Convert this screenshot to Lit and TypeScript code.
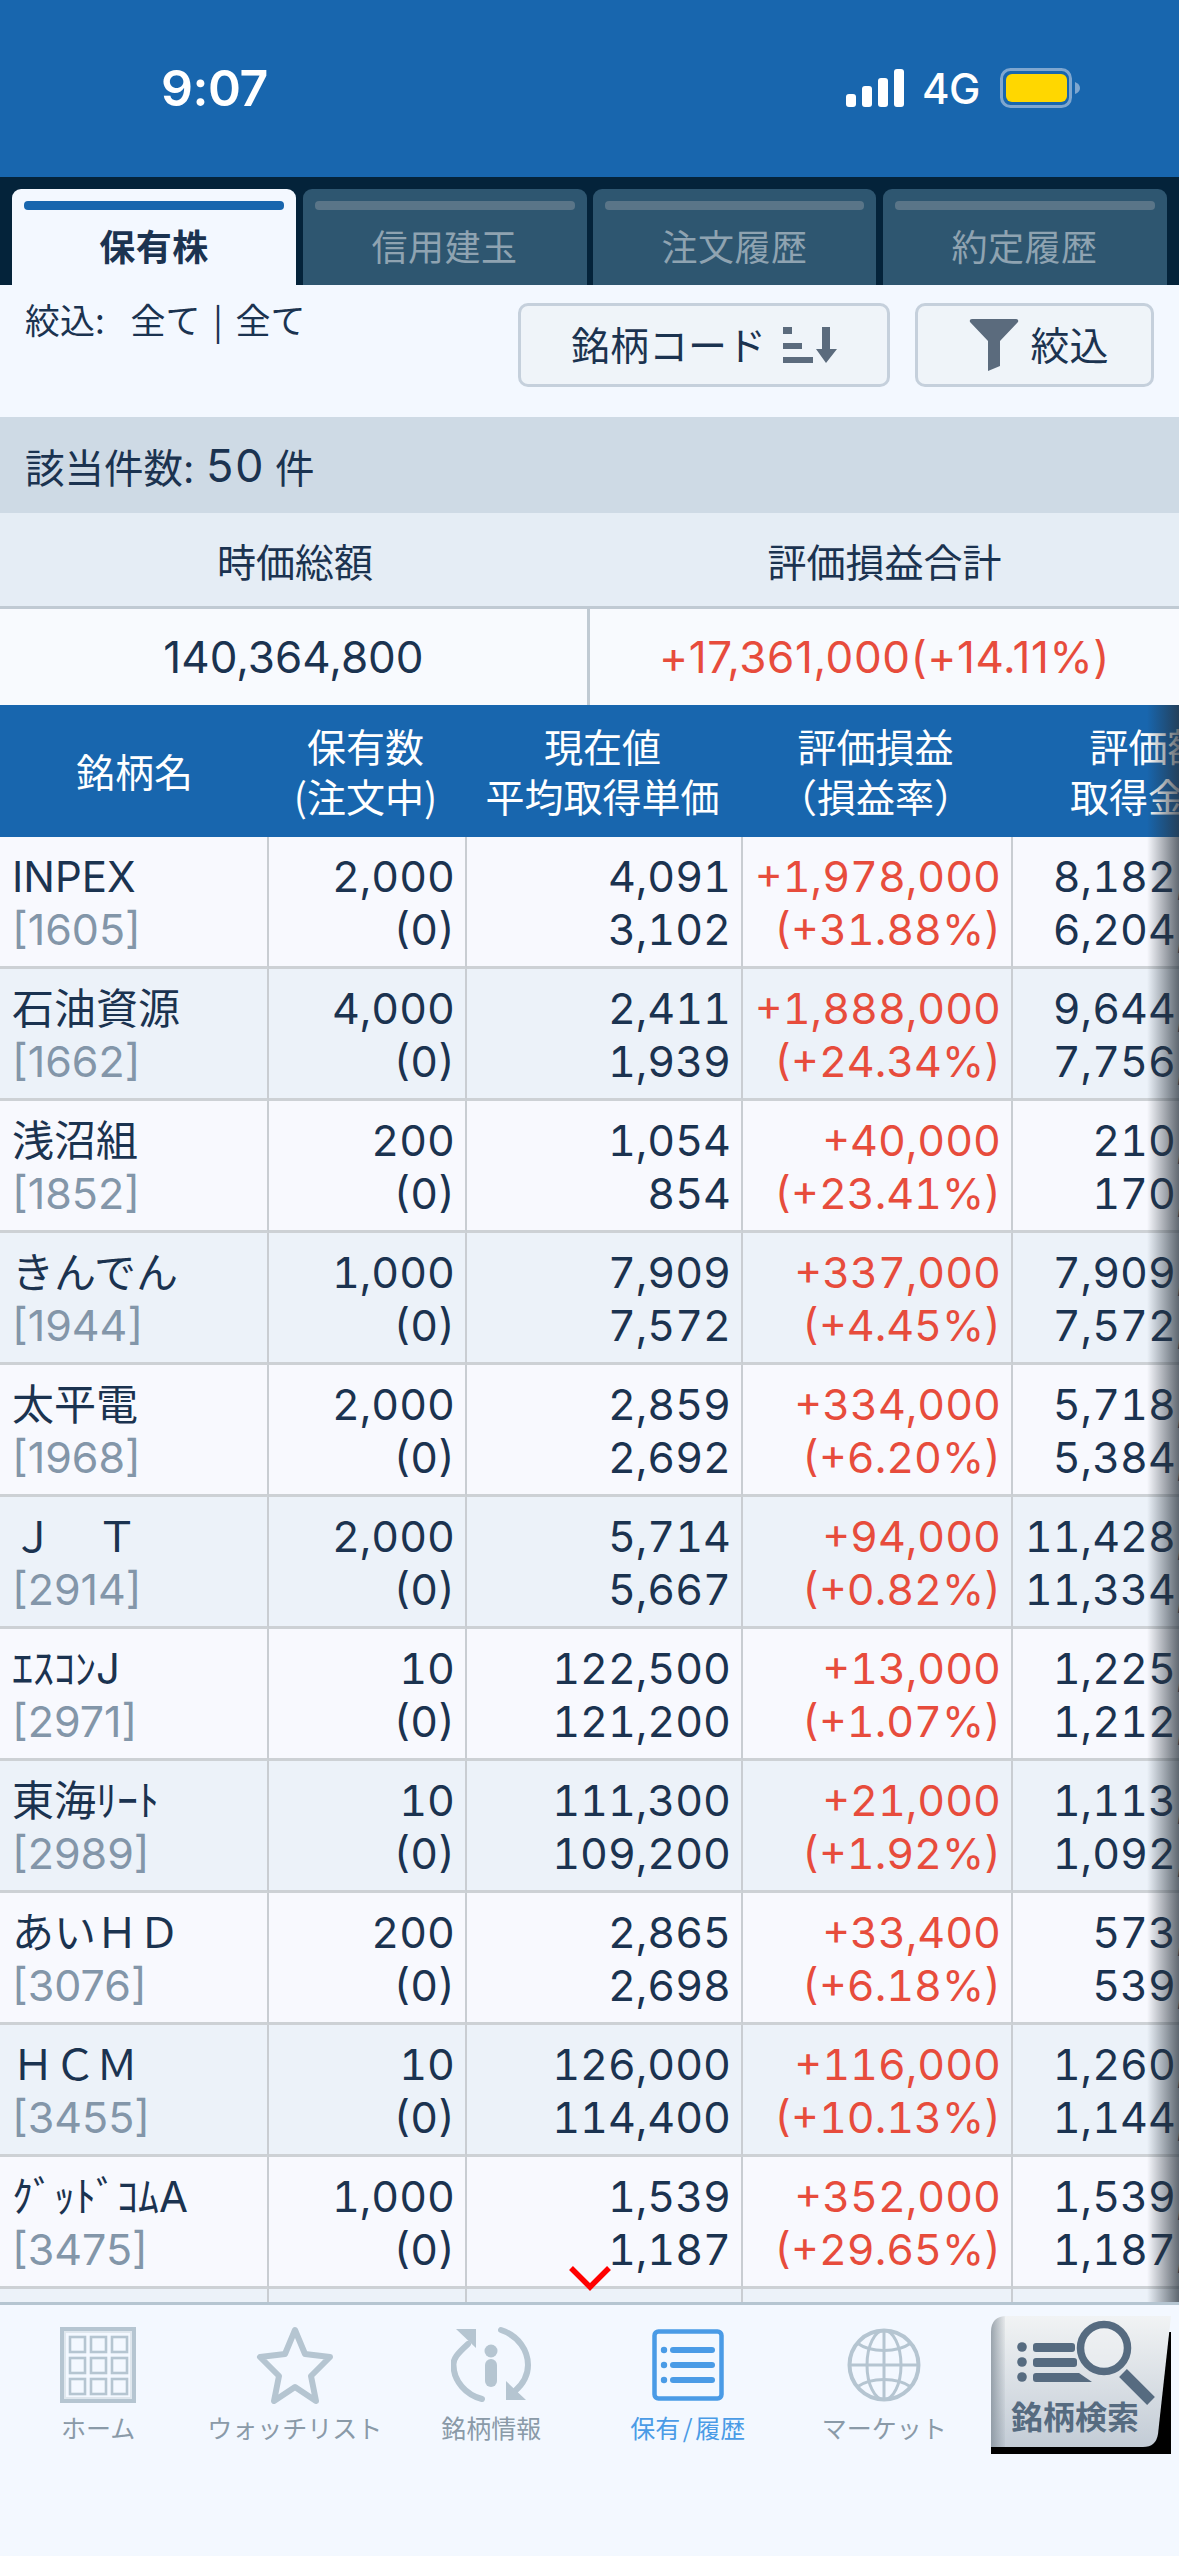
import { LitElement, html, css, svg } from "lit";
import { customElement } from "lit/decorators.js";

const rows = [
  ["INPEX", "1605", "2,000", "4,091", "3,102", "+1,978,000", "(+31.88%)", "8,182,000", "6,204,000"],
  ["石油資源", "1662", "4,000", "2,411", "1,939", "+1,888,000", "(+24.34%)", "9,644,000", "7,756,000"],
  ["浅沼組", "1852", "200", "1,054", "854", "+40,000", "(+23.41%)", "210,800", "170,800"],
  ["きんでん", "1944", "1,000", "7,909", "7,572", "+337,000", "(+4.45%)", "7,909,000", "7,572,000"],
  ["太平電", "1968", "2,000", "2,859", "2,692", "+334,000", "(+6.20%)", "5,718,000", "5,384,000"],
  ["Ｊ　Ｔ", "2914", "2,000", "5,714", "5,667", "+94,000", "(+0.82%)", "11,428,000", "11,334,000"],
  ["ｴｽｺﾝJ", "2971", "10", "122,500", "121,200", "+13,000", "(+1.07%)", "1,225,000", "1,212,000"],
  ["東海ﾘｰﾄ", "2989", "10", "111,300", "109,200", "+21,000", "(+1.92%)", "1,113,000", "1,092,000"],
  ["あいＨＤ", "3076", "200", "2,865", "2,698", "+33,400", "(+6.18%)", "573,000", "539,600"],
  ["ＨＣＭ", "3455", "10", "126,000", "114,400", "+116,000", "(+10.13%)", "1,260,000", "1,144,000"],
  ["ｸﾞｯﾄﾞｺﾑA", "3475", "1,000", "1,539", "1,187", "+352,000", "(+29.65%)", "1,539,000", "1,187,000"],
];

const homeIcon = html`<svg class="ico" width="76" height="76" viewBox="0 0 76 76">
  <rect x="2" y="2" width="72" height="72" fill="#dfe7ee" stroke="#b5c5d1" stroke-width="4"/>
  <rect x="6" y="6" width="64" height="64" fill="#f3f8ff"/>
  ${[9, 30, 51].map((y) =>
    [9, 30, 51].map((x) => svg`<rect x="${x + 1}" y="${y + 1}" width="15" height="15" fill="none" stroke="#b5c5d1" stroke-width="2.6"/>`)
  )}
</svg>`;

const starIcon = html`<svg class="ico" width="78" height="78" viewBox="0 0 78 78">
  <path d="M39 4 L49 28 L74 31 L55 50 L60 75 L39 61 L18 75 L23 50 L4 31 L29 28 Z" fill="none" stroke="#b5c5d1" stroke-width="6" stroke-linejoin="round"/>
</svg>`;

const infoIcon = html`<svg class="ico" width="80" height="76" viewBox="0 0 80 76">
  <path d="M17 17 C6 27 2 32 2.500 38 C2.500 54 15 68 31 72" fill="none" stroke="#b5c5d1" stroke-width="6" stroke-linecap="round"/>
  <path d="M50 3 C68 9 77 24 77 38 C77 48 72 57 64 64" fill="none" stroke="#b5c5d1" stroke-width="6" stroke-linecap="round"/>
  <path d="M5 2 H25 V21 Z" fill="#b5c5d1"/>
  <path d="M55 54 V73 H75 Z" fill="#b5c5d1"/>
  <circle cx="40" cy="24" r="6.500" fill="#b5c5d1"/>
  <rect x="34" y="32" width="12" height="28" rx="6" fill="#b5c5d1"/>
</svg>`;

const listIcon = html`<svg class="ico" width="72" height="72" viewBox="0 0 72 72">
  <rect x="2.500" y="2.500" width="67" height="67" rx="4" fill="none" stroke="#4a9be6" stroke-width="4.500"/>
  ${[21, 36, 51].map(
    (y) => svg`<circle cx="12" cy="${y}" r="3.200" fill="#4a9be6"/><rect x="18" y="${y - 3}" width="45" height="6" rx="3" fill="#4a9be6"/>`
  )}
</svg>`;

const globeIcon = html`<svg class="ico" width="74" height="74" viewBox="0 0 74 74" fill="none" stroke="#b5c5d1" stroke-width="3">
  <circle cx="37" cy="37" r="34.500" stroke-width="4"/>
  <ellipse cx="37" cy="37" rx="17" ry="34.500"/>
  <path d="M37 2.500 V71.500"/>
  <path d="M2.500 37 H71.500"/>
  <path d="M10 15 C24 25 50 25 64 15"/>
  <path d="M10 59 C24 49 50 49 64 59"/>
</svg>`;

const searchButton = html`<svg class="search" width="180" height="138" viewBox="0 0 180 138">
  <defs>
    <linearGradient id="sg" x1="0" y1="0" x2="0" y2="1">
      <stop offset="0" stop-color="#f1f3f4"/>
      <stop offset="1" stop-color="#c3ccd6"/>
    </linearGradient>
    <linearGradient id="se" x1="0" y1="0" x2="1" y2="0">
      <stop offset="0" stop-color="#7f8b96" stop-opacity=".75"/>
      <stop offset="1" stop-color="#7f8b96" stop-opacity="0"/>
    </linearGradient>
  </defs>
  <path d="M0 16 H180 V138 H0 Z" fill="#000"/>
  <path d="M16 0 H180 L167 118 Q165 131 152 131 H0 V16 Q0 0 16 0 Z" fill="url(#sg)"/>
  <path d="M16 0 H14 V131 H0 V16 Q0 0 16 0 Z" fill="url(#se)"/>
  ${[31, 46, 61].map((y) => svg`<circle cx="31" cy="${y}" r="4.800" fill="#566b80"/>`)}
  <rect x="42" y="27" width="42" height="9" rx="3" fill="#566b80"/>
  <rect x="42" y="42" width="44" height="9" rx="3" fill="#566b80"/>
  <path d="M45 57 H88 L101 66 H45 Q42 66 42 63 V60 Q42 57 45 57 Z" fill="#566b80"/>
  <circle cx="113" cy="32" r="23.500" fill="#f0f2f3" fill-opacity=".5" stroke="#566b80" stroke-width="7.500"/>
  <path d="M132 57 L160 85" stroke="#566b80" stroke-width="11"/>
  <text x="84" y="113" text-anchor="middle" class="stext">銘柄検索</text>
</svg>`;

@customElement("app-root")
export class AppRoot extends LitElement {
  static styles = css`
    :host {
      display: flex;
      flex-direction: column;
      position: relative;
      width: 1179px;
      height: 2556px;
      overflow: hidden;
      background: #f3f8ff;
      color: #1b3350;
      font-family: Inter, "Noto Sans CJK JP", sans-serif;
    }
    .status {
      height: 177px;
      flex: none;
      background: #1866ae;
      color: #fff;
      display: flex;
      align-items: center;
      box-sizing: border-box;
      padding: 0 99px 0 161px;
    }
    .time {
      font-size: 50px;
      font-weight: 600;
      letter-spacing: -0.5px;
      margin-top: -2px;
    }
    .status-right {
      margin-left: auto;
      display: flex;
      align-items: center;
      margin-top: -1px;
    }
    .net {
      font-size: 42px;
      font-weight: 500;
      margin: 0 20px 0 18px;
      letter-spacing: -0.5px;
    }
    .tabs {
      flex: none;
      height: 108px;
      box-sizing: border-box;
      background: #04233a;
      padding: 12px 12px 0;
      display: grid;
      grid-template-columns: 284px 284px 283px 284px;
      column-gap: 6.500px;
    }
    .tab {
      background: #2e5670;
      border-radius: 9px 9px 0 0;
      padding: 12px;
      display: flex;
      flex-direction: column;
      align-items: stretch;
      color: #8fa3b1;
      font-size: 36px;
      font-family: "Noto Sans CJK JP", sans-serif;
      text-align: center;
    }
    .tab .bar {
      height: 9px;
      border-radius: 4px;
      background: #5a7588;
      margin-bottom: 10px;
    }
    .tab span {
      line-height: 50px;
      letter-spacing: 0.5px;
    }
    .tab.on {
      background: #f3f8ff;
      color: #1b3350;
      font-weight: 700;
    }
    .tab.on .bar {
      background: #1866ae;
    }
    .filter {
      flex: none;
      height: 132px;
      box-sizing: border-box;
      padding: 18px 25px 0 25px;
      display: flex;
      align-items: flex-start;
      font-family: "Noto Sans CJK JP", sans-serif;
    }
    .flabel {
      font-size: 35px;
      line-height: 42px;
      white-space: pre;
      word-spacing: 5px;
      margin-top: -5px;
    }
    .btn {
      box-sizing: border-box;
      height: 84px;
      border: 3px solid #c5d0dc;
      border-radius: 10px;
      background: #eff4f9;
      display: flex;
      align-items: center;
      justify-content: center;
      font-size: 39px;
    }
    .btn span {
      margin-top: -4px;
    }
    .btn1 {
      margin-left: auto;
      width: 372px;
      gap: 17px;
    }
    .btn2 {
      width: 239px;
      margin-left: 25px;
      gap: 11px;
      padding-left: 9px;
    }
    .count {
      flex: none;
      height: 96px;
      background: #cedae5;
      display: flex;
      align-items: center;
      padding-left: 25px;
      font-size: 39.500px;
      white-space: pre;
    }
    .count b {
      font-weight: 400;
      font-size: 45px;
      font-variant-numeric: tabular-nums;
    }
    .sumh {
      flex: none;
      height: 93px;
      background: #e5edf5;
      display: grid;
      grid-template-columns: 590px 1fr;
      align-items: center;
      text-align: center;
      font-size: 39px;
      border-bottom: 3px solid #c0cad3;
    }
    .sumv {
      flex: none;
      height: 96px;
      background: #f8fafe;
      display: grid;
      grid-template-columns: 590px 1fr;
      align-items: stretch;
      text-align: center;
      font-size: 44px;
    }
    .sumv div {
      display: flex;
      align-items: center;
      justify-content: center;
    }
    .sumv div:first-child {
      border-right: 3px solid #c0cad3;
    }
    .sumv .up {
      letter-spacing: 0.6px;
    }
    .up {
      color: #e74c3c;
    }
    .table {
      flex: 1;
      min-height: 0;
      overflow: hidden;
      width: 1179px;
    }
    .grid {
      width: 1283px;
      display: grid;
      grid-template-columns: 269px 198px 276px 270px 270px;
    }
    .th {
      height: 132px;
      background: #1866ae;
      color: #fff;
      font-size: 39px;
      line-height: 50px;
      text-align: center;
      display: flex;
      flex-direction: column;
      justify-content: center;
      font-family: "Noto Sans CJK JP", sans-serif;
      padding-bottom: 2px;
      box-sizing: border-box;
    }
    .th.p {
      padding-right: 5px;
    }
    .c {
      box-sizing: border-box;
      height: 132px;
      border-bottom: 3px solid #cdd1d5;
      border-right: 2px solid #c9cdd2;
      font-size: 43px;
      line-height: 53px;
      display: flex;
      flex-direction: column;
      justify-content: center;
      align-items: flex-end;
      padding: 2px 10px 0 0;
      white-space: nowrap;
      background: #f8f9fe;
      font-variant-numeric: tabular-nums;
    }
    .c.alt {
      background: #ecf2f9;
    }
    .c.name {
      align-items: flex-start;
      padding: 2px 0 0 12px;
      font-size: 42px;
      font-variant-numeric: normal;
    }
    .code {
      color: #8396a9;
      font-size: 43px;
    }
    .c:last-child {
      border-right: 0;
    }
    .shade {
      position: absolute;
      right: 0;
      top: 705px;
      width: 32px;
      height: 1597px;
      background: linear-gradient(to right, rgba(40, 50, 60, 0), rgba(40, 50, 60, 0.72));
      pointer-events: none;
    }
    .chev {
      position: absolute;
      left: 569px;
      top: 2264px;
    }
    .nav {
      flex: none;
      height: 254px;
      box-sizing: border-box;
      border-top: 3px solid #b5c5d1;
      background: #f3f8ff;
      display: grid;
      grid-template-columns: repeat(6, 1fr);
    }
    .item {
      display: flex;
      flex-direction: column;
      align-items: center;
      font-size: 25px;
      color: #8a9aa8;
      font-family: "Noto Sans CJK JP", sans-serif;
      padding-top: 21px;
      white-space: nowrap;
    }
    .ico {
      display: block;
      height: 78px;
    }
    .item span {
      line-height: 36px;
      margin-top: 5px;
    }
    .item.on {
      color: #4a9be6;
      word-spacing: -3px;
    }
    .item.s {
      padding-top: 11px;
    }
    .search {
      display: block;
    }
    .stext {
      font-size: 32px;
      font-weight: 700;
      fill: #566b80;
      font-family: "Noto Sans CJK JP", sans-serif;
    }
  `;

  render() {
    const empty = [0, 1, 2, 3, 4];
    return html`
      <div class="status">
        <div class="time">9:07</div>
        <div class="status-right">
          <svg width="58" height="38" viewBox="0 0 58 38">
            <rect x="0" y="25" width="10" height="13" rx="3" fill="#fff"/>
            <rect x="16" y="17" width="10" height="21" rx="3" fill="#fff"/>
            <rect x="32" y="9" width="10" height="29" rx="3" fill="#fff"/>
            <rect x="48" y="0" width="10" height="38" rx="3" fill="#fff"/>
          </svg>
          <span class="net">4G</span>
          <svg width="80" height="40" viewBox="0 0 80 40">
            <rect x="1.500" y="1.500" width="69" height="37" rx="9" fill="none" stroke="#7ea6cf" stroke-width="3"/>
            <rect x="6" y="6" width="61" height="28" rx="6" fill="#ffd700"/>
            <path d="M75 14 Q80 16 80 20 Q80 24 75 26 Z" fill="#7ea6cf"/>
          </svg>
        </div>
      </div>
      <div class="tabs">
        ${["保有株", "信用建玉", "注文履歴", "約定履歴"].map(
          (t, i) => html`<div class="tab ${i === 0 ? "on" : ""}"><div class="bar"></div><span>${t}</span></div>`
        )}
      </div>
      <div class="filter">
        <div class="flabel">絞込:  全て | 全て</div>
        <div class="btn btn1">
          <span>銘柄コード</span>
          <svg width="54" height="36" viewBox="0 0 54 36" fill="#5b6b7d">
            <rect x="0" y="0" width="9" height="7"/>
            <rect x="0" y="16" width="19" height="6"/>
            <rect x="0" y="30" width="30" height="6"/>
            <path d="M39 0 H47 V22 H54 L43 36 L33 22 H39 Z"/>
          </svg>
        </div>
        <div class="btn btn2">
          <svg width="50" height="52" viewBox="0 0 50 52" fill="#5b6b7d">
            <path d="M3 0 H47 Q50 0 49 3 L31 22 V47 L19 52 V22 L1 3 Q0 0 3 0 Z"/>
          </svg>
          <span>絞込</span>
        </div>
      </div>
      <div class="count">該当件数: <b>50</b> 件</div>
      <div class="sumh"><div>時価総額</div><div>評価損益合計</div></div>
      <div class="sumv"><div>140,364,800</div><div class="up">+17,361,000(+14.11%)</div></div>
      <div class="table">
        <div class="grid">
          <div class="th"><div>銘柄名</div></div>
          <div class="th p"><div>保有数</div><div>(注文中)</div></div>
          <div class="th p"><div>現在値</div><div>平均取得単価</div></div>
          <div class="th p"><div>評価損益</div><div>（損益率）</div></div>
          <div class="th"><div>評価額</div><div>取得金額</div></div>
          ${rows.map((r, i) => {
            const alt = i % 2 === 1 ? "alt" : "";
            return html`
              <div class="c name ${alt}"><div>${r[0]}</div><div class="code">[${r[1]}]</div></div>
              <div class="c ${alt}"><div>${r[2]}</div><div>(0)</div></div>
              <div class="c ${alt}"><div>${r[3]}</div><div>${r[4]}</div></div>
              <div class="c up ${alt}"><div>${r[5]}</div><div>${r[6]}</div></div>
              <div class="c ${alt}"><div>${r[7]}</div><div>${r[8]}</div></div>
            `;
          })}
          ${empty.map(() => html`<div class="c alt"></div>`)}
        </div>
      </div>
      <div class="nav">
        <div class="item">${homeIcon}<span>ホーム</span></div>
        <div class="item">${starIcon}<span>ウォッチリスト</span></div>
        <div class="item">${infoIcon}<span>銘柄情報</span></div>
        <div class="item on">${listIcon}<span>保有 / 履歴</span></div>
        <div class="item">${globeIcon}<span>マーケット</span></div>
        <div class="item s">${searchButton}</div>
      </div>
      <div class="shade"></div>
      <svg class="chev" width="42" height="28" viewBox="0 0 42 28">
        <path d="M2 4 L21 23 L40 4" fill="none" stroke="#f00" stroke-width="5.500"/>
      </svg>
    `;
  }
}
